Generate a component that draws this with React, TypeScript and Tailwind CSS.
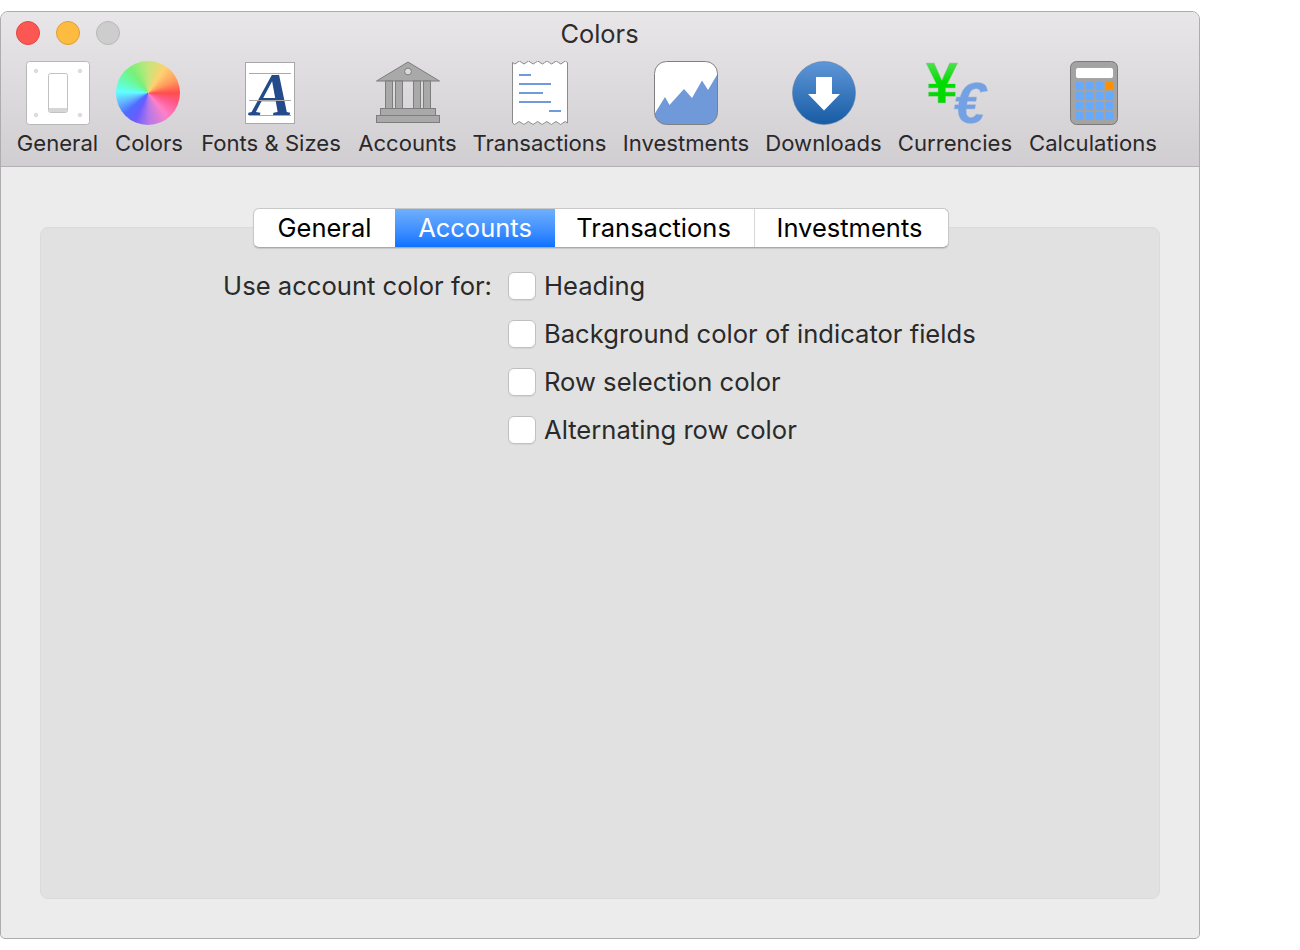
import React from "react";

function GeneralIcon() {
  return (
    <svg width="64" height="64" viewBox="0 0 64 64">
      <rect x="0.5" y="0.5" width="63" height="63" rx="3" fill="#fff" stroke="#b8b8b8" />
      {[[10, 10], [54, 10], [10, 54], [54, 54]].map(([x, y]) => (
        <circle key={`${x}-${y}`} cx={x} cy={y} r="1.8" fill="#ddd" stroke="#ccc" strokeWidth="0.6" />
      ))}
      <rect x="22.5" y="12.5" width="19" height="39" rx="2" fill="#fff" stroke="#c2c2c2" />
      <path d="M23 47h18v2.5a1.5 1.5 0 0 1-1.5 1.5h-15a1.5 1.5 0 0 1-1.5-1.5z" fill="#d6d6d6" />
    </svg>
  );
}

function ColorsIcon() {
  return (
    <div className="w-[64px] h-[64px] rounded-full bg-[conic-gradient(from_0deg,#c4e67c_0deg,#ffd070_35deg,#ff9a5c_65deg,#ff4d4d_90deg,#ff5c90_112deg,#ff80c8_140deg,#b478e8_178deg,#6a5cff_205deg,#4f6cff_228deg,#62b4ff_250deg,#62ffff_272deg,#68faa8_300deg,#78f078_325deg,#c4e67c_360deg)]" />
  );
}

function FontsIcon() {
  return (
    <svg width="50" height="62" viewBox="0 0 50 62" overflow="visible">
      <rect x="0.5" y="0.5" width="49" height="61" fill="#fff" stroke="#a8a8a8" />
      <text x="27" y="53" textAnchor="middle" fontFamily="'Liberation Serif', serif" fontWeight="700" fontStyle="italic" fontSize="62" fill="#234b8c">A</text>
      <line x1="4" x2="46" y1="11.5" y2="11.5" stroke="#aaa" />
      <line x1="4" x2="46" y1="38.5" y2="38.5" stroke="#aaa" />
      <line x1="4" x2="46" y1="53.5" y2="53.5" stroke="#aaa" />
    </svg>
  );
}

function AccountsIcon() {
  const s = { fill: "#a9a9a9", stroke: "#7d7d7d", strokeWidth: 1 };
  return (
    <svg width="64" height="64" viewBox="0 0 64 64">
      <path d="M32 1L63.5 20H0.5z" {...s} />
      <circle cx="32" cy="10.5" r="3.4" fill="#dcdcdc" stroke="#7d7d7d" />
      <rect x="9.5" y="20" width="7" height="28" {...s} />
      <rect x="19.5" y="20" width="7" height="28" {...s} />
      <rect x="37.5" y="20" width="7" height="28" {...s} />
      <rect x="47.5" y="20" width="7" height="28" {...s} />
      <rect x="4.5" y="47.5" width="55" height="7" {...s} />
      <rect x="0.5" y="54.5" width="63" height="7" {...s} />
    </svg>
  );
}

function TransactionsIcon() {
  return (
    <svg width="56" height="64" viewBox="0 0 56 64">
      <path
        d="M0.5 1.5q2.3 3 4.6 0t4.6 0 4.6 0 4.6 0 4.6 0 4.6 0 4.6 0 4.6 0 4.6 0 4.6 0 4.6 0 4.4 0V62q-2.3-3-4.6 0t-4.6 0-4.6 0-4.6 0-4.6 0-4.6 0-4.6 0-4.6 0-4.6 0-4.6 0-4.6 0-4.4 0z"
        fill="#fff"
        stroke="#8a8a8a"
      />
      <g fill="#6f9bdc">
        <rect x="7" y="13" width="12" height="2" />
        <rect x="7" y="22" width="32" height="2" />
        <rect x="7" y="31" width="24" height="2" />
        <rect x="7" y="40" width="32" height="2" />
        <rect x="37" y="49" width="12" height="2" />
      </g>
    </svg>
  );
}

function InvestmentsIcon() {
  return (
    <svg width="64" height="64" viewBox="0 0 64 64">
      <rect x="0.5" y="0.5" width="63" height="63" rx="12" fill="#fff" />
      <path
        d="M0.5 53L11 36l4.5 8L30 28l8 9 10-17.5 6 9.5 9.5-16V51.5a12 12 0 0 1-12 12h-39a12 12 0 0 1-12-10.5z"
        fill="#6f99d8"
      />
      <rect x="0.5" y="0.5" width="63" height="63" rx="12" fill="none" stroke="#808080" />
    </svg>
  );
}

function DownloadsIcon() {
  return (
    <svg width="64" height="64" viewBox="0 0 64 64">
      <defs>
        <linearGradient id="dl" x1="0" y1="0" x2="0" y2="1">
          <stop offset="0" stopColor="#5f97d8" />
          <stop offset="1" stopColor="#175ba4" />
        </linearGradient>
      </defs>
      <circle cx="32" cy="32" r="31.5" fill="url(#dl)" stroke="#5a7ea8" strokeWidth="0.6" />
      <path d="M24 16h16v17h8L32 49.5 16 33h8z" fill="#fff" />
    </svg>
  );
}

function CurrenciesIcon() {
  return (
    <svg width="62" height="64" viewBox="0 0 62 64" overflow="visible">
      <defs>
        <linearGradient id="yen" x1="0" y1="0" x2="0" y2="1">
          <stop offset="0" stopColor="#7fe27f" />
          <stop offset="0.5" stopColor="#00dc00" />
          <stop offset="1" stopColor="#00d800" />
        </linearGradient>
      </defs>
      <text x="18" y="42" textAnchor="middle" fontFamily="'Liberation Sans', sans-serif" fontWeight="700" fontSize="58" fill="url(#yen)" stroke="#a8c8a8" strokeWidth="0.4">¥</text>
      <text x="45.5" y="62" textAnchor="middle" fontFamily="'Liberation Sans', sans-serif" fontWeight="700" fontStyle="italic" fontSize="58" fill="#74a0e4" stroke="#a8bcd8" strokeWidth="0.4">€</text>
    </svg>
  );
}

function CalculationsIcon() {
  const xs = [5.5, 15.5, 25.5, 35.5];
  const ys = [21, 31, 41, 51];
  return (
    <svg width="48" height="64" viewBox="0 0 48 64">
      <rect x="0.5" y="0.5" width="47" height="63" rx="6" fill="#a3a3a3" stroke="#7a7a7a" />
      <rect x="5.5" y="6.5" width="38" height="11" rx="2.5" fill="#fff" stroke="#8a8a8a" strokeWidth="0.6" />
      {ys.map((y, r) =>
        xs.map((x, c) => (
          <rect
            key={`${r}-${c}`}
            x={x}
            y={y}
            width="8"
            height="8"
            rx="1.8"
            fill={r === 0 && c === 3 ? "#ff9000" : "#66aaff"}
          />
        ))
      )}
    </svg>
  );
}

const tools = [
  { label: "General", w: "w-[81px]", shift: "", icon: <GeneralIcon /> },
  { label: "Colors", w: "w-[68px]", shift: "-ml-[2px]", icon: <ColorsIcon /> },
  { label: "Fonts & Sizes", w: "w-[142px]", shift: "-ml-[2px]", icon: <FontsIcon /> },
  { label: "Accounts", w: "w-[97px]", shift: "", icon: <AccountsIcon /> },
  { label: "Transactions", w: "w-[133px]", shift: "", icon: <TransactionsIcon /> },
  { label: "Investments", w: "w-[126px]", shift: "", icon: <InvestmentsIcon /> },
  { label: "Downloads", w: "w-[115px]", shift: "", icon: <DownloadsIcon /> },
  { label: "Currencies", w: "w-[114px]", shift: "", icon: <CurrenciesIcon /> },
  { label: "Calculations", w: "w-[128px]", shift: "ml-[2px]", icon: <CalculationsIcon /> },
];

const tabs = [
  { label: "General", w: "w-[141px]", active: false, pad: "" },
  { label: "Accounts", w: "w-[160px]", active: true, pad: "" },
  { label: "Transactions", w: "w-[199px]", active: false, pad: "pr-[2px]" },
  { label: "Investments", w: "w-[194px]", active: false, pad: "pr-[4px]" },
];

const options = ["Heading", "Background color of indicator fields", "Row selection color", "Alternating row color"];

export default function App() {
  return (
    <div className="min-h-[950px] bg-white pt-[11px] font-['Inter','Liberation_Sans',sans-serif]">
      <div className="w-[1200px] h-[928px] flex flex-col rounded-t-[8px] rounded-b-[5px] border border-[#adadad] bg-[#ececec] overflow-hidden">
        <div className="h-[155px] flex flex-col shrink-0 bg-gradient-to-b from-[#e8e6e8] to-[#d0ced0] border-b border-[#b2b2b2]">
          <div className="relative h-[47px] flex items-center pb-[5px]">
            <div className="flex items-center gap-[16px] pl-[15px]">
              <span className="w-[24px] h-[24px] rounded-full bg-[#fc5753] border border-[#df4744]" />
              <span className="w-[24px] h-[24px] rounded-full bg-[#fdbc40] border border-[#de9f34]" />
              <span className="w-[24px] h-[24px] rounded-full bg-[#cdcdcd] border border-[#b9b9b9]" />
            </div>
            <div className="absolute left-0 right-0 text-center text-[25.4px] text-[#2e2c2e] leading-[30px] pt-[2px] -ml-[1px]">Colors</div>
          </div>
          <div className="flex gap-[17px] pl-[16px] pt-[2px]">
            {tools.map((t) => (
              <div key={t.label} className={`flex flex-col items-center shrink-0 ${t.w}`}>
                <div className={`h-[64px] flex items-center justify-center ${t.shift}`}>{t.icon}</div>
                <div className="mt-[3px] text-[22.1px] leading-[30px] whitespace-nowrap text-[#2a282b]">{t.label}</div>
              </div>
            ))}
          </div>
        </div>
        <div className="flex-1 flex flex-col px-[39px] pt-[41px] pb-[39px]">
          <div className="relative z-10 flex justify-center pl-[2px]">
            <div className="flex h-[40px] rounded-[6px] bg-white border border-[#c8c8c8] border-b-[#aaaaaa] overflow-hidden shadow-[0_1px_1px_rgba(0,0,0,0.12)]">
              {tabs.map((t, i) => (
                <div
                  key={t.label}
                  className={`${t.w} ${t.pad} flex items-center justify-center pt-[1px] text-[25.5px] ${
                    t.active
                      ? "bg-gradient-to-b from-[#6fb0fd] to-[#0a72ff] text-white"
                      : `text-black ${i === 3 ? "border-l border-[#d8d8d8]" : ""}`
                  }`}
                >
                  {t.label}
                </div>
              ))}
            </div>
          </div>
          <div className="flex-1 -mt-[21px] rounded-[8px] border border-[#dadada] bg-[#e1e1e1] flex pt-[34px]">
            <div className="w-[451px] text-right text-[25.6px] leading-[48px] h-[48px] text-[#2a2a2a] whitespace-nowrap">
              Use account color for:
            </div>
            <div className="ml-[16px] flex flex-col">
              {options.map((o) => (
                <div key={o} className="h-[48px] flex items-center gap-[8px]">
                  <span className="w-[28px] h-[28px] rounded-[6px] bg-white border border-[#c0c0c0] shadow-[0_1px_1px_rgba(0,0,0,0.06)]" />
                  <span className="text-[25.6px] text-[#2a2a2a] whitespace-nowrap">{o}</span>
                </div>
              ))}
            </div>
          </div>
        </div>
      </div>
    </div>
  );
}
